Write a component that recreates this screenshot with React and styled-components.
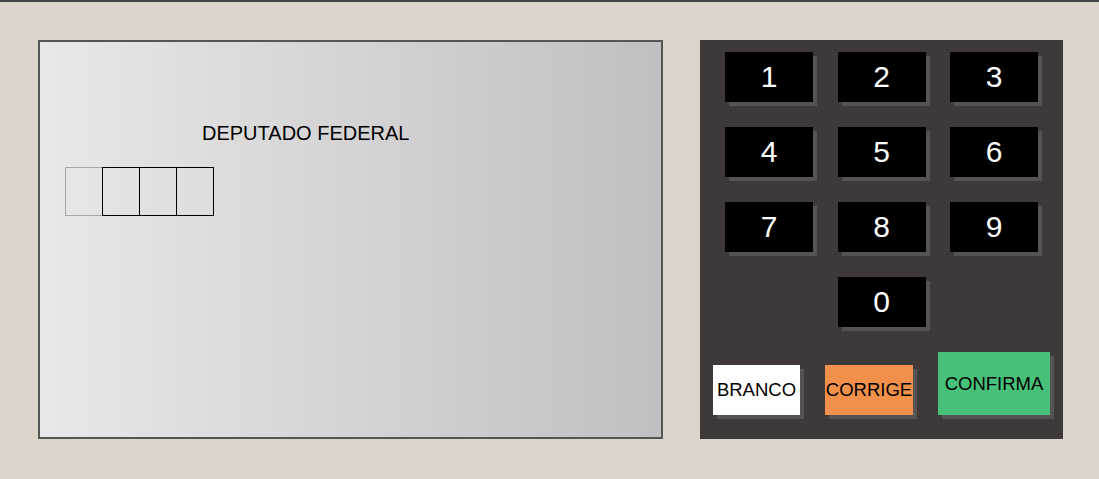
import styled, { createGlobalStyle } from "styled-components";

const GlobalStyle = createGlobalStyle`
  html, body {
    margin: 0;
    padding: 0;
    background: #dcd5ca;
  }
  body {
    font-family: "Liberation Sans", Arial, sans-serif;
  }
`;

const keys = ["1", "2", "3", "4", "5", "6", "7", "8", "9"];

export default function App() {
  return (
    <>
      <GlobalStyle />
      <Page>
        <Screen>
          <Title>DEPUTADO FEDERAL</Title>
          <Digits>
            <DigitBox $active />
            <DigitBox />
            <DigitBox />
            <DigitBox />
          </Digits>
        </Screen>
        <Keypad>
          <KeyGrid>
            {keys.map((k) => (
              <Key key={k}>{k}</Key>
            ))}
            <Key $col={2}>0</Key>
          </KeyGrid>
          <ActionRow>
            <ActionButton $bg="#ffffff" $w={87} $h={50}>
              BRANCO
            </ActionButton>
            <ActionButton $bg="#f0904a" $w={88} $h={50}>
              CORRIGE
            </ActionButton>
            <ActionButton $bg="#47c07a" $w={112} $h={63}>
              CONFIRMA
            </ActionButton>
          </ActionRow>
        </Keypad>
      </Page>
    </>
  );
}

const Page = styled.div`
  display: flex;
  gap: 37px;
  min-height: 479px;
  box-sizing: border-box;
  border-top: 2px solid #444444;
  padding: 38px 0 0 38px;
  background: #dcd5ca;
`;

const Screen = styled.div`
  box-sizing: border-box;
  width: 625px;
  height: 399px;
  border: 2px solid #555555;
  background: linear-gradient(to right, #e8e8e8, #c0c0c0);
  padding: 80px 0 0 25px;
`;

const Title = styled.div`
  margin-left: 137px;
  font-size: 20px;
  line-height: 23px;
  color: #000000;
`;

const Digits = styled.div`
  display: flex;
  margin-top: 22px;
`;

const DigitBox = styled.div`
  box-sizing: border-box;
  width: 38px;
  height: 49px;
  border: 1px solid ${(p) => (p.$active ? "#a8a8a8" : "#000000")};
  & + & {
    margin-left: -1px;
  }
`;

const Keypad = styled.div`
  box-sizing: border-box;
  width: 363px;
  height: 399px;
  background: #3f3939;
  padding-top: 12px;
`;

const KeyGrid = styled.div`
  display: grid;
  grid-template-columns: repeat(3, 88px);
  column-gap: 24.5px;
  row-gap: 25px;
  padding-left: 25px;
`;

const Key = styled.div`
  grid-column: ${(p) => (p.$col ? p.$col : "auto")};
  height: 50px;
  background: #000000;
  color: #ffffff;
  font-size: 30px;
  display: flex;
  align-items: center;
  justify-content: center;
  box-shadow: 4px 4px 0 #555353;
`;

const ActionRow = styled.div`
  display: flex;
  align-items: flex-end;
  gap: 25px;
  margin-top: 25px;
  padding-left: 13px;
`;

const ActionButton = styled.div`
  width: ${(p) => p.$w}px;
  height: ${(p) => p.$h}px;
  background: ${(p) => p.$bg};
  color: #000000;
  font-size: 18.5px;
  display: flex;
  align-items: center;
  justify-content: center;
  white-space: nowrap;
  box-shadow: 4px 4px 0 #555353;
`;
